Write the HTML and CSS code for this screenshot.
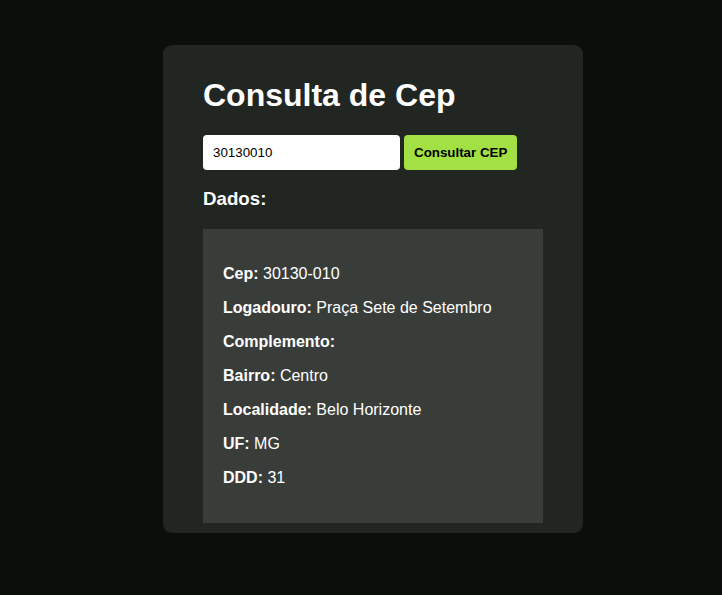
FILE: index.html
```html
<!DOCTYPE html>
<html lang="pt-BR">
<head>
<meta charset="utf-8">
<title>Consulta de Cep</title>
<link rel="stylesheet" href="styles.css">
</head>
<body>
<main class="page">
  <section class="card">
    <h1 class="title">Consulta de Cep</h1>
    <form class="search">
      <input class="search-input" type="text" value="30130010">
      <button class="search-btn" type="button">Consultar CEP</button>
    </form>
    <h3 class="subtitle">Dados:</h3>
    <div class="result">
      <p><strong>Cep:</strong> 30130-010</p>
      <p><strong>Logadouro:</strong> Praça Sete de Setembro</p>
      <p><strong>Complemento:</strong> </p>
      <p><strong>Bairro:</strong> Centro</p>
      <p><strong>Localidade:</strong> Belo Horizonte</p>
      <p><strong>UF:</strong> MG</p>
      <p><strong>DDD:</strong> 31</p>
    </div>
  </section>
</main>
</body>
</html>
```
FILE: styles.css
```css
html, body {
  margin: 0;
  padding: 0;
  background: #0b0f0b;
  font-family: "Liberation Sans", Arial, sans-serif;
  color: #ffffff;
}

.page {
  padding: 45px 0 0 163px;
}

.card {
  width: 340px;
  padding: 11px 40px 10px;
  background: #222623;
  border-radius: 9px;
}

.title {
  font-size: 32px;
  font-weight: bold;
  margin: 21px 0 21px;
}

.search {
  display: flex;
  gap: 4px;
  margin: 0;
}

.search-input {
  box-sizing: border-box;
  width: 197px;
  height: 35px;
  padding: 0 10px;
  border: none;
  border-radius: 4px;
  background: #ffffff;
  color: #000000;
  font-family: "Liberation Sans", Arial, sans-serif;
  font-size: 13.33px;
  outline: none;
}

.search-btn {
  box-sizing: border-box;
  height: 35px;
  padding: 0 10px;
  border: none;
  border-radius: 4px;
  background: #a2e043;
  color: #000000;
  font-family: "Liberation Sans", Arial, sans-serif;
  font-size: 13.33px;
  font-weight: bold;
}

.subtitle {
  font-size: 18.72px;
  font-weight: bold;
  margin: 18px 0 19px;
}

.result {
  background: #393d3a;
  padding: 20px;
}

.result p {
  margin: 16px 0;
  font-size: 16px;
  line-height: 18px;
}
```
